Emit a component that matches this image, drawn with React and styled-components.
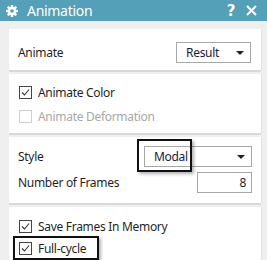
import React from "react";
import styled, { createGlobalStyle } from "styled-components";

const GlobalStyle = createGlobalStyle`
  body {
    margin: 0;
    background: #efefef;
    font-family: "Noto Sans", "Open Sans", sans-serif;
  }
`;

const Dialog = styled.div`
  width: 267px;
  height: 260px;
  overflow: hidden;
  background: #efefef;
  display: flex;
  flex-direction: column;
`;

const TitleBar = styled.div`
  height: 21px;
  background: #54a0b8;
  display: flex;
  align-items: center;
  padding: 0 6px;
  color: #fff;
  flex-shrink: 0;
`;

const Title = styled.span`
  font-size: 14px;
  margin-left: 9px;
  flex: 1;
  letter-spacing: -0.3px;
`;

const TitleButton = styled.span`
  width: 20px;
  display: flex;
  justify-content: center;
  font-weight: bold;
  font-size: 15px;
  font-family: "DejaVu Sans", sans-serif;
`;

const Body = styled.div`
  display: flex;
  flex-direction: column;
  gap: 4px;
  padding: 8px 6px 0 9px;
`;

const Panel = styled.div`
  background: #fff;
  box-shadow: 0 2px 0 #d9d9d9, 1px 0 0 #e2e2e2;
  padding: ${(p) => p.$pad};
  display: flex;
  flex-direction: column;
  gap: ${(p) => p.$gap || 0}px;
  flex: ${(p) => (p.$grow ? 1 : "none")};
  min-height: ${(p) => p.$h}px;
  box-sizing: border-box;
`;

const Row = styled.div`
  position: relative;
  display: flex;
  align-items: center;
  justify-content: space-between;
  height: ${(p) => p.$h || 21}px;
  font-size: 12px;
  letter-spacing: -0.3px;
  color: #1f1f1f;
`;

const Select = styled.div`
  position: relative;
  width: ${(p) => p.$w}px;
  height: 21px;
  box-sizing: border-box;
  border: 1px solid #a8a8a8;
  display: flex;
  align-items: center;
  justify-content: space-between;
  padding: 0 6px 0 9px;
  font-size: 12px;
  color: #1a1a3a;
`;

const Arrow = styled.span`
  width: 0;
  height: 0;
  border-left: 4px solid transparent;
  border-right: 4px solid transparent;
  border-top: 4px solid #222;
`;

const NumberInput = styled.div`
  width: 55px;
  height: 21px;
  box-sizing: border-box;
  border: 1px solid #a8a8a8;
  display: flex;
  align-items: center;
  justify-content: flex-end;
  padding-right: 5px;
  font-size: 12px;
`;

const CheckRow = styled.label`
  position: relative;
  display: flex;
  align-items: center;
  gap: 6px;
  height: ${(p) => p.$h || 22}px;
  padding-left: 10px;
  font-size: 12px;
  letter-spacing: -0.3px;
  color: ${(p) => (p.$disabled ? "#a8a8a8" : "#1f1f1f")};
`;

const Box = styled.span`
  width: 13px;
  height: 13px;
  box-sizing: border-box;
  border: 1px solid ${(p) => (p.$disabled ? "#d0d0d0" : "#444")};
  background: #fff;
  display: flex;
  align-items: center;
  justify-content: center;
`;

const Highlight = styled.span`
  position: absolute;
  left: ${(p) => p.$l}px;
  top: ${(p) => p.$t}px;
  width: ${(p) => p.$w}px;
  height: ${(p) => p.$hh}px;
  box-sizing: border-box;
  border: 2px solid #111;
  box-shadow: 2px 2px 3px rgba(0, 0, 0, 0.3);
  pointer-events: none;
`;

const Gear = () => (
  <svg width="12" height="12" viewBox="0 0 12 12">
    <g fill="#fff">
      {[0, 45, 90, 135, 180, 225, 270, 315].map((a) => (
        <rect key={a} x="4.8" y="0" width="2.4" height="3" transform={`rotate(${a} 6 6)`} />
      ))}
      <circle cx="6" cy="6" r="4.3" />
    </g>
    <circle cx="6" cy="6" r="1.8" fill="#54a0b8" />
  </svg>
);

const Close = () => (
  <svg width="11" height="11" viewBox="0 0 11 11">
    <path d="M1 1L10 10M10 1L1 10" stroke="#fff" strokeWidth="2" />
  </svg>
);

const Check = () => (
  <svg width="11" height="11" viewBox="0 0 11 11">
    <path d="M2 5.5L4.5 8L9 2.5" stroke="#333" strokeWidth="1.1" fill="none" />
  </svg>
);

function Checkbox({ label, checked, disabled, h, children }) {
  return (
    <CheckRow $disabled={disabled} $h={h}>
      <Box $disabled={disabled}>{checked && <Check />}</Box>
      {label}
      {children}
    </CheckRow>
  );
}

export default function App() {
  return (
    <Dialog>
      <GlobalStyle />
      <TitleBar>
        <Gear />
        <Title>Animation</Title>
        <TitleButton>?</TitleButton>
        <TitleButton>
          <Close />
        </TitleButton>
      </TitleBar>
      <Body>
        <Panel $pad="13px 10px 7px 9px" $h={41}>
          <Row>
            Animate
            <Select $w={75}>
              Result
              <Arrow />
            </Select>
          </Row>
        </Panel>
        <Panel $pad="6px 0 0 0" $h={59}>
          <Checkbox label="Animate Color" checked h={24} />
          <Checkbox label="Animate Deformation" disabled h={25} />
        </Panel>
        <Panel $pad="9px 9px 10px 9px" $gap={5} $h={66}>
          <Row>
            Style
            <Select $w={108}>
              Modal
              <Arrow />
              <Highlight $l={-8} $t={-8} $w={55} $hh={33} />
            </Select>
          </Row>
          <Row>
            Number of Frames
            <NumberInput>8</NumberInput>
          </Row>
        </Panel>
        <Panel $pad="9px 0 0 0" $grow $h={60}>
          <Checkbox label="Save Frames In Memory" checked h={21} />
          <Checkbox label="Full-cycle" checked h={22}>
            <Highlight $l={4} $t={-1} $w={86} $hh={24} />
          </Checkbox>
        </Panel>
      </Body>
    </Dialog>
  );
}
